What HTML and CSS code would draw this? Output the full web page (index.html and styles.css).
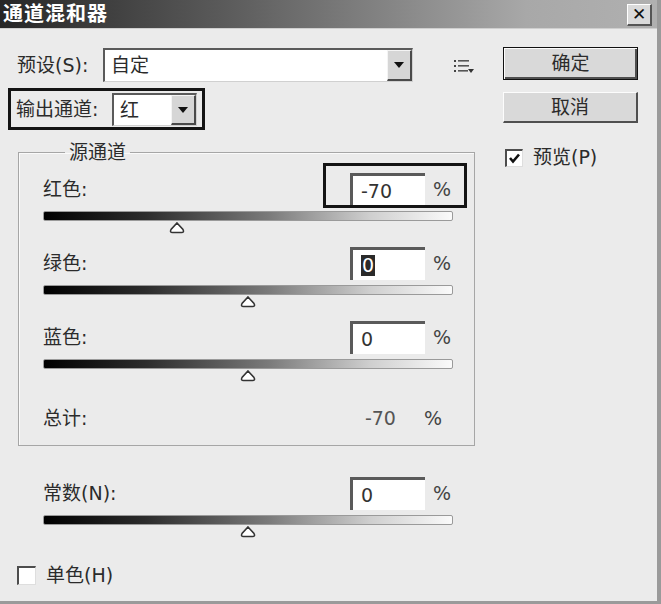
FILE: index.html
```html
<!DOCTYPE html>
<html lang="zh-CN">
  <head>
    <meta charset="utf-8"/>
    <title>通道混和器</title>
    <link rel="stylesheet" href="styles.css">
  </head>

  <body>
    <div class="dialog">
      <div class="titlebar">
        <span class="title">通道混和器</span>
        <span class="close">&#x2715;</span>
      </div>

      <div class="content">
        <div class="main">
          <div class="preset-row">
            <span class="preset-label">预设(S):</span>
            <div class="select preset-select">
              <span class="select-text">自定</span>
              <span class="dd"><span class="arrow"></span></span>
            </div>
            <svg class="menu-icon" width="21" height="19" viewBox="0 0 21 19">
              <rect x="1" y="4" width="2" height="2" fill="#444"/>
              <rect x="5" y="4" width="11" height="1.6" fill="#555"/>
              <rect x="1" y="9" width="2" height="2" fill="#444"/>
              <rect x="5" y="9" width="11" height="1.6" fill="#555"/>
              <rect x="1" y="14" width="2" height="2" fill="#444"/>
              <rect x="5" y="14" width="10" height="1.6" fill="#555"/>
              <path d="M15 13 L21 13 L18 17 Z" fill="#333"/>
            </svg>
          </div>

          <div class="output-box">
            <span class="output-label">输出通道:</span>
            <div class="select output-select">
              <span class="select-text">红</span>
              <span class="dd"><span class="arrow"></span></span>
            </div>
          </div>

          <fieldset class="group">
            <legend>源通道</legend>

            <div class="channel">
              <div class="field-row">
                <span class="field-label">红色:</span>
                <div class="value marked">
                  <span class="num-input">-70</span>
                  <span class="pct">%</span>
                </div>
              </div>
              <div class="slider">
                <span class="thumb" style="left: 32.5%"></span>
              </div>
            </div>

            <div class="channel">
              <div class="field-row">
                <span class="field-label">绿色:</span>
                <div class="value">
                  <span class="num-input"><span class="sel">0</span></span>
                  <span class="pct">%</span>
                </div>
              </div>
              <div class="slider">
                <span class="thumb" style="left: 50%"></span>
              </div>
            </div>

            <div class="channel">
              <div class="field-row">
                <span class="field-label">蓝色:</span>
                <div class="value">
                  <span class="num-input">0</span>
                  <span class="pct">%</span>
                </div>
              </div>
              <div class="slider">
                <span class="thumb" style="left: 50%"></span>
              </div>
            </div>

            <div class="total-row">
              <span class="field-label">总计:</span>
              <span class="total-value">-70</span>
              <span class="total-pct">%</span>
            </div>
          </fieldset>

          <div class="constant">
            <div class="field-row">
              <span class="field-label">常数(N):</span>
              <div class="value">
                <span class="num-input">0</span>
                <span class="pct">%</span>
              </div>
            </div>
            <div class="slider">
              <span class="thumb" style="left: 50%"></span>
            </div>
          </div>

          <div class="check mono">
            <span class="box"></span>
            <span>单色(H)</span>
          </div>
        </div>

        <div class="side">
          <div class="btn default">确定</div>
          <div class="btn">取消</div>
          <div class="check preview">
            <span class="box">
              <svg width="13" height="13" viewBox="0 0 13 13">
                <path d="M2 6 L5 9.5 L11 2.5" fill="none" stroke="#111" stroke-width="2.6"/>
              </svg>
            </span>
            <span>预览(P)</span>
          </div>
        </div>
      </div>
    </div>
  </body>

</html>
```

FILE: styles.css
```css
* {
  box-sizing: border-box;
}

body {
  margin: 0;
  background-color: #ebebeb;
  color: #2b2b2b;
  font: 19px / 1 "DejaVu Sans", "Noto Sans CJK SC", sans-serif;
}

.dialog {
  width: 661px;
  height: 604px;
  background-color: #ebebeb;
  border-right: 4px solid #9a9a9a;
  border-bottom: 3px solid #9a9a9a;
}

/* title bar */
.titlebar {
  height: 29px;
  display: flex;
  align-items: center;
  justify-content: space-between;
  background: linear-gradient(to right, #262626 0%, #5c5c5c 35%, #a8a8a8 80%, #b0b0b0 100%);
  border-bottom: 1px solid #cfcfcf;
}

.title {
  color: #fff;
  font-weight: bold;
  font-size: 20px;
  padding-left: 3px;
  letter-spacing: 1px;
}

.close {
  width: 25px;
  height: 22px;
  margin-right: 5px;
  margin-top: 2px;
  display: flex;
  align-items: center;
  justify-content: center;
  background-color: #dadada;
  border-top: 1px solid #fff;
  border-left: 1px solid #fff;
  border-right: 2px solid #555;
  border-bottom: 2px solid #555;
  font-size: 17px;
  font-weight: bold;
  color: #111;
}

.content {
  display: flex;
}

.main {
  width: 503px;
  padding: 19px 0 0 8px;
}

/* selects */
.preset-row {
  display: flex;
  align-items: center;
  height: 34px;
  padding-left: 9px;
}

.preset-label {
  width: 86px;
}

.select {
  display: flex;
  background-color: #fff;
  border-top: 2px solid #5a5a5a;
  border-left: 2px solid #5a5a5a;
  border-right: 1px solid #d0d0d0;
  border-bottom: 1px solid #d0d0d0;
}

.preset-select {
  width: 310px;
  height: 34px;
}

.select-text {
  flex: 1;
  display: flex;
  align-items: center;
  padding-left: 6px;
}

.dd {
  width: 25px;
  display: flex;
  align-items: center;
  justify-content: center;
  background-color: #d6d6d6;
  border-top: 1px solid #f4f4f4;
  border-left: 1px solid #f4f4f4;
  border-right: 2px solid #4a4a4a;
  border-bottom: 2px solid #4a4a4a;
}

.arrow {
  width: 0;
  height: 0;
  border-left: 5px solid transparent;
  border-right: 5px solid transparent;
  border-top: 6px solid #111;
}

.menu-icon {
  margin-left: 40px;
}

.output-box {
  display: inline-flex;
  align-items: center;
  margin-top: 6px;
  padding: 2px 5px 1px 5px;
  border: 3px solid #141414;
}

.output-label {
  width: 96px;
}

.output-select {
  width: 85px;
  height: 33px;
}

/* source group */
.group {
  width: 457px;
  margin: 12px 0 0 10px;
  padding: 11px 21px 17px 24px;
  border: 1px solid #a6a6a6;
  box-shadow: inset 1px 1px 0 #fafafa;
  min-width: 0;
}

.group legend {
  margin-left: 22px;
  padding: 0 4px;
  line-height: 20px;
}

.channel {
  padding-bottom: 26px;
}

.field-row {
  display: flex;
  align-items: center;
  height: 33px;
}

.field-label {
  flex: 1;
}

.value {
  display: flex;
  align-items: center;
  position: relative;
}

.value.marked::after {
  content: "";
  position: absolute;
  top: -10px;
  bottom: -2px;
  left: -27px;
  right: -14px;
  border: 3px solid #141414;
}

.num-input {
  width: 75px;
  height: 33px;
  display: flex;
  align-items: center;
  padding-left: 8px;
  background-color: #fff;
  border-top: 3px solid #5a5a5a;
  border-left: 3px solid #5a5a5a;
  color: #333;
}

.sel {
  background-color: #2a2a2a;
  color: #fff;
  padding: 1px 1px;
}

.pct {
  width: 20px;
  margin-left: 8px;
  color: #444;
}

.slider {
  position: relative;
  height: 10px;
  margin-top: 5px;
  border: 1px solid #9a9a9a;
  border-radius: 2px;
  background: linear-gradient(to right, #000 0%, #2c2c2c 25%, #7a7a7a 55%, #cfcfcf 80%, #fafafa 100%);
}

.thumb {
  position: absolute;
  top: 9px;
  width: 19px;
  height: 13px;
  transform: translateX(-50%);
  background: no-repeat center / 19px 13px url("data:image/svg+xml,%3Csvg xmlns='http://www.w3.org/2000/svg' width='19' height='13' viewBox='0 0 19 13'%3E%3Cpath d='M9.5 2 L15.5 8.5 Q17 11.5 14 11.5 L5 11.5 Q2 11.5 3.5 8.5 Z' fill='%23fff' stroke='%23333' stroke-width='1.6'/%3E%3C/svg%3E");
}

.total-row {
  display: flex;
  align-items: center;
  height: 20px;
  margin-top: 13px;
  padding-right: 11px;
}

.total-value {
  color: #555;
}

.total-pct {
  margin-left: 28px;
  color: #444;
}

/* constant */
.constant {
  width: 457px;
  margin: 31px 0 0 10px;
  padding: 0 22px 0 25px;
}

/* checkboxes */
.check {
  display: flex;
  align-items: center;
  gap: 10px;
}

.box {
  display: flex;
  align-items: center;
  justify-content: center;
  background-color: #fff;
  border-top: 2px solid #4d4d4d;
  border-left: 2px solid #4d4d4d;
  border-right: 1px solid #dedede;
  border-bottom: 1px solid #dedede;
}

.mono {
  margin: 41px 0 0 9px;
}

.mono .box {
  width: 19px;
  height: 19px;
}

.preview {
  margin: 25px 0 0 2px;
}

.preview .box {
  width: 18px;
  height: 18px;
}

/* buttons */
.side {
  width: 135px;
  padding-top: 18px;
}

.btn {
  display: flex;
  align-items: center;
  justify-content: center;
  height: 31px;
  margin-top: 12px;
  background-color: #d9d9d9;
  border-top: 1px solid #fcfcfc;
  border-left: 1px solid #fcfcfc;
  border-right: 2px solid #4f4f4f;
  border-bottom: 2px solid #4f4f4f;
}

.btn.default {
  height: 33px;
  margin-top: 0;
  border: 1px solid #111;
  box-shadow: inset 1px 1px 0 #fcfcfc, inset -2px -2px 0 #4f4f4f;
}
```
